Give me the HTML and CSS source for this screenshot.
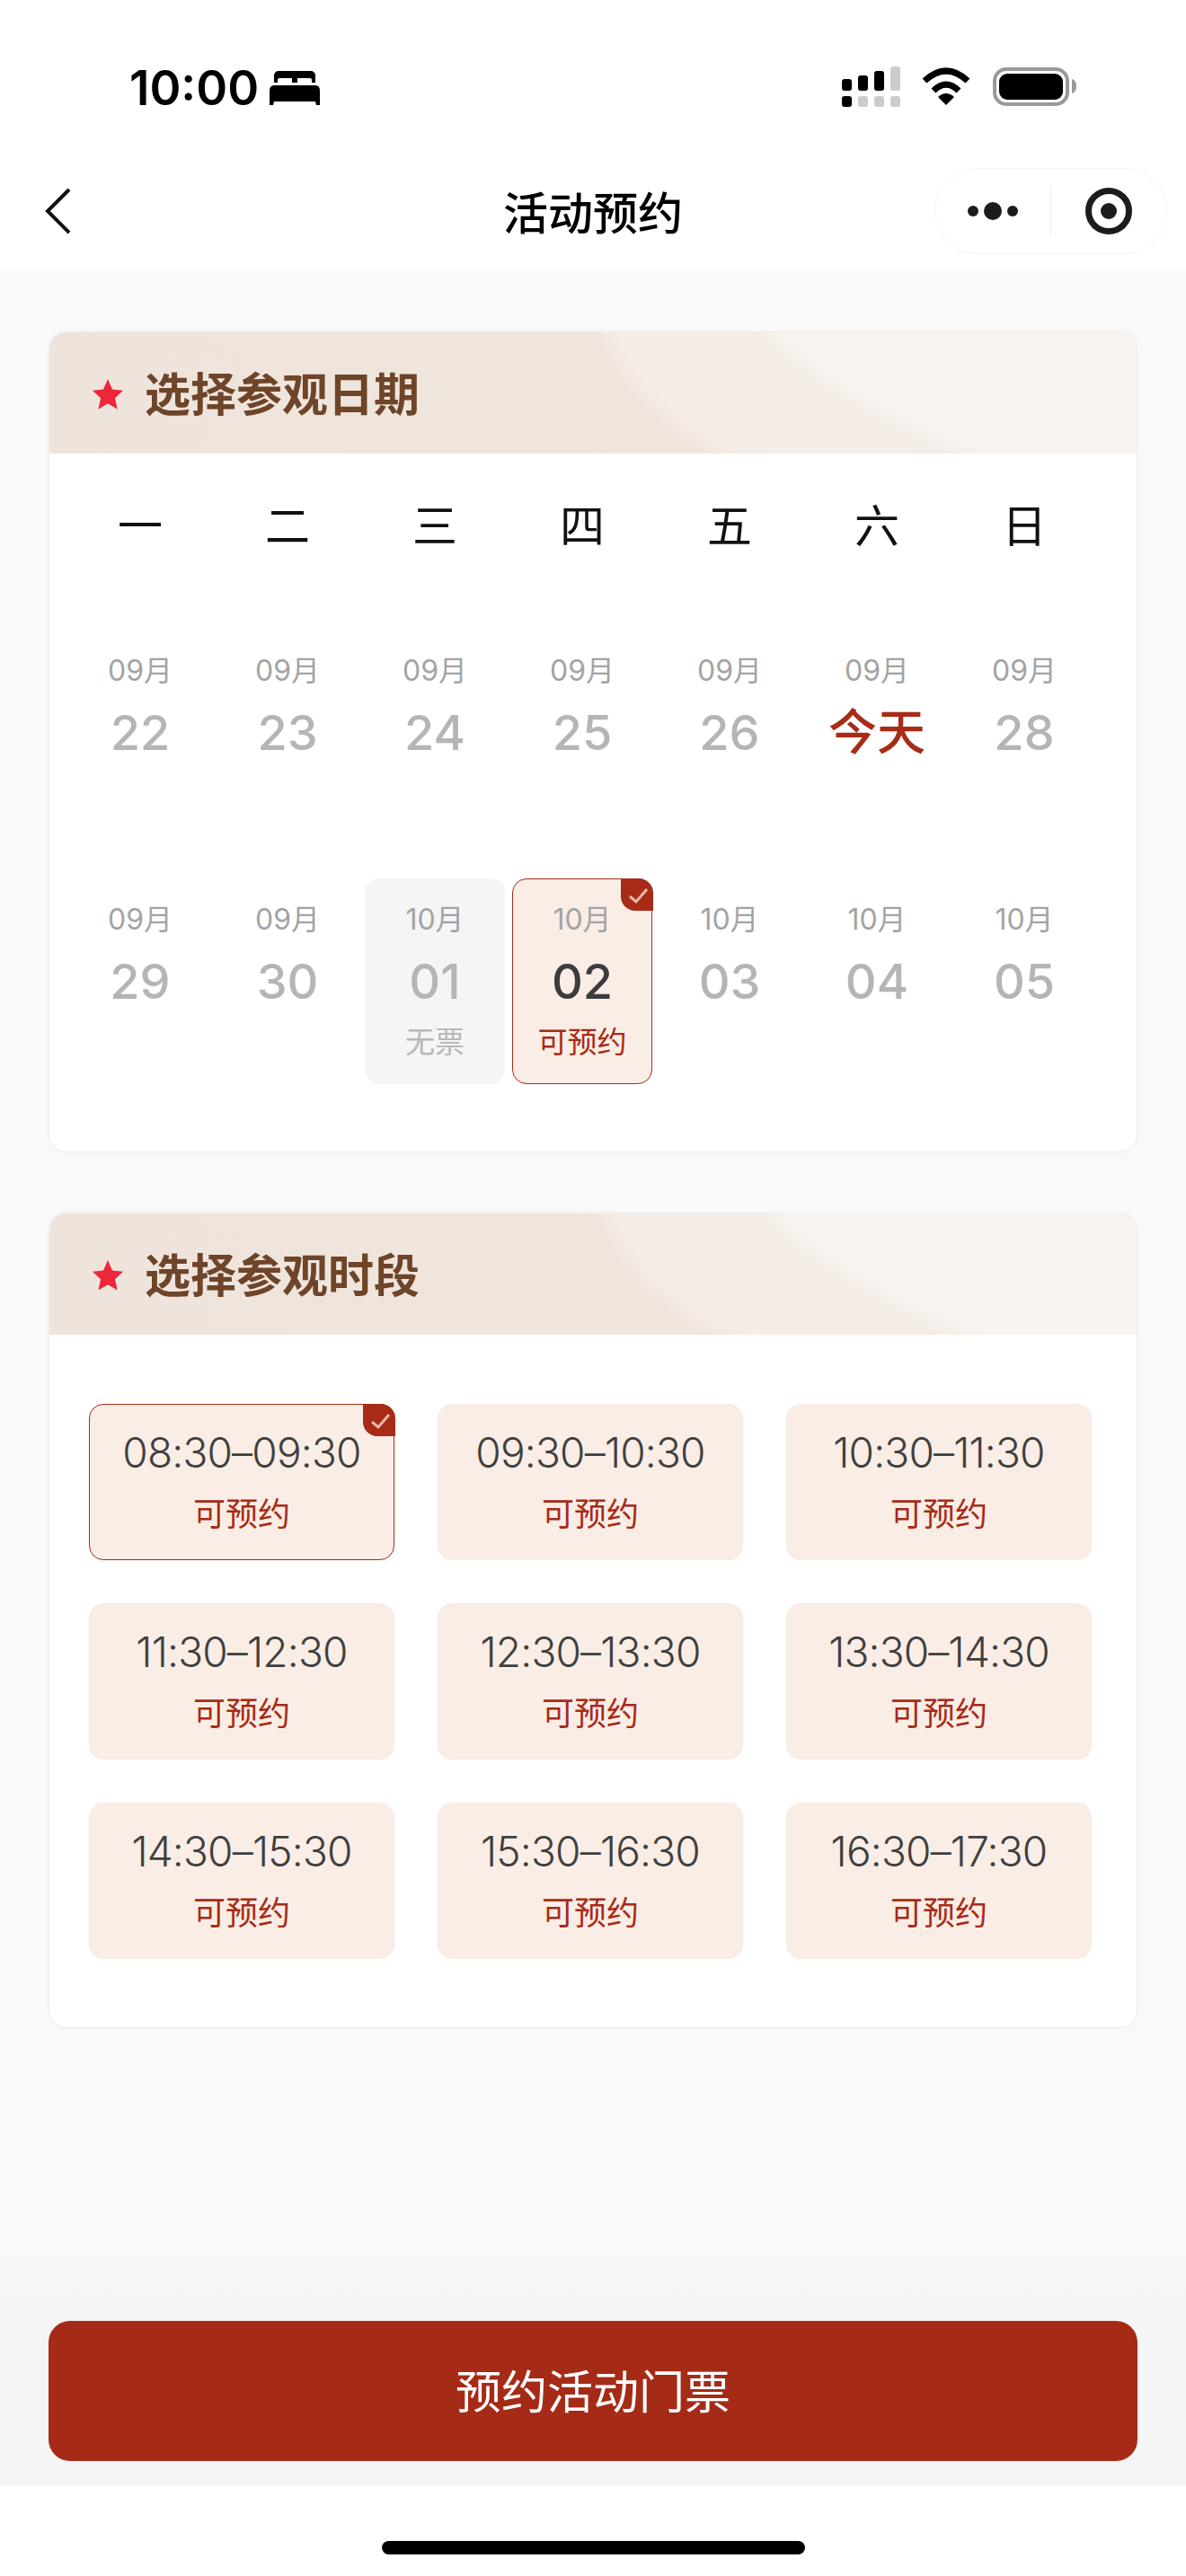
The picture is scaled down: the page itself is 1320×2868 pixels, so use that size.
FILE: index.html
```html
<!DOCTYPE html>
<html lang="zh-Hans">
<head>
  <meta charset="UTF-8">
  <title>活动预约</title>
  <link rel="stylesheet" href="styles.css">
</head>
<body>
  <div class="page">
    <div class="status-bar">
      <div class="status-left">
        <span class="clock">10:00</span>
        <svg class="bed" viewBox="0 0 56 38" width="56" height="38">
          <path d="M5 13V5a5 5 0 0 1 5-5h36a5 5 0 0 1 5 5v8h-4V10q0-2-2-2H31v5h-6V8H11q-2 0-2 2v3z"/>
          <path d="M5 16h46q5 0 5 6v16h-4l-1-4H5l-1 4H0V22q0-6 5-6z"/>
        </svg>
      </div>
      <svg class="status-right" viewBox="0 0 264 52" width="264" height="52">
        <rect x="0" y="16" width="11" height="13" rx="3"/>
        <rect x="18" y="12" width="11" height="17" rx="3"/>
        <rect x="36" y="7" width="11" height="22" rx="3"/>
        <rect x="54" y="2" width="11" height="27" rx="3" fill="#cccccc"/>
        <rect x="0" y="35" width="11" height="12" rx="3"/>
        <rect x="18" y="35" width="11" height="12" rx="3" fill="#cccccc"/>
        <rect x="36" y="35" width="11" height="12" rx="3" fill="#cccccc"/>
        <rect x="54" y="35" width="11" height="12" rx="3" fill="#cccccc"/>
        <path d="M92 18Q116 -4 140 18" fill="none" stroke="#000" stroke-width="7"/>
        <path d="M102 29Q116 15 130 29" fill="none" stroke="#000" stroke-width="7"/>
        <path d="M116 45L107 36Q116 28 125 36z"/>
        <rect x="170" y="5" width="81" height="39" rx="13" fill="none" stroke="#999999" stroke-width="4"/>
        <rect x="175" y="10" width="71" height="29" rx="9"/>
        <path d="M256 16C260 17 261 21 261 24C261 27 260 31 256 32z" fill="#999999"/>
      </svg>
    </div>

    <div class="nav-bar">
      <svg class="back" viewBox="0 0 30 52" width="30" height="52">
        <path d="M27 2L3 26L27 50" fill="none" stroke="#111" stroke-width="4"/>
      </svg>
      <div class="nav-title">活动预约</div>
      <div class="capsule">
        <div class="capsule-side">
          <svg viewBox="0 0 66 20" width="66" height="20" fill="#1c1c1c">
            <circle cx="11" cy="10" r="6"/>
            <circle cx="33" cy="10" r="10"/>
            <circle cx="55" cy="10" r="6"/>
          </svg>
        </div>
        <div class="capsule-line"></div>
        <div class="capsule-side">
          <svg viewBox="0 0 52 52" width="52" height="52" fill="#1c1c1c">
            <circle cx="26" cy="26" r="22.5" fill="none" stroke="#1c1c1c" stroke-width="7"/>
            <circle cx="26" cy="26" r="9"/>
          </svg>
        </div>
      </div>
    </div>

    <div class="content">
      <div class="panel date-panel">
        <div class="panel-head">
          <svg class="head-bg" viewBox="0 0 1212 136" preserveAspectRatio="none">
            <path class="swoosh" d="M612 -30C630 40 670 100 800 160H1280V-30z" fill="#f5ede7"/>
            <path class="swoosh" d="M780 -30C830 50 950 110 1080 160H1280V-30z" fill="#f8f3ee"/>
          </svg>
          <svg class="star" viewBox="0 0 34 34" width="34" height="34">
            <path d="M17 0l5 11.500 12 1.300-9 8.400 2.600 12.300L17 27.300 6.400 33.500 9 21.200 0 12.800l12-1.300z"/>
          </svg>
          <span class="panel-title">选择参观日期</span>
        </div>
        <div class="date-body">
          <div class="week">
            <div>一</div><div>二</div><div>三</div><div>四</div><div>五</div><div>六</div><div>日</div>
          </div>
          <div class="date-grid">
            <div class="day"><span class="day-month">09月</span><span class="day-num">22</span></div>
            <div class="day"><span class="day-month">09月</span><span class="day-num">23</span></div>
            <div class="day"><span class="day-month">09月</span><span class="day-num">24</span></div>
            <div class="day"><span class="day-month">09月</span><span class="day-num">25</span></div>
            <div class="day"><span class="day-month">09月</span><span class="day-num">26</span></div>
            <div class="day"><span class="day-month">09月</span><span class="day-num today">今天</span></div>
            <div class="day"><span class="day-month">09月</span><span class="day-num">28</span></div>
            <div class="day"><span class="day-month">09月</span><span class="day-num">29</span></div>
            <div class="day"><span class="day-month">09月</span><span class="day-num">30</span></div>
            <div class="day soldout"><span class="day-month">10月</span><span class="day-num">01</span><span class="day-state">无票</span></div>
            <div class="day selected">
              <span class="check">
                <svg viewBox="0 0 36 36" width="36" height="36"><path d="M10 20L17 26L29 12" fill="none" stroke="#e9b8ad" stroke-width="3"/></svg>
              </span>
              <span class="day-month">10月</span><span class="day-num">02</span><span class="day-state">可预约</span>
            </div>
            <div class="day"><span class="day-month">10月</span><span class="day-num">03</span></div>
            <div class="day"><span class="day-month">10月</span><span class="day-num">04</span></div>
            <div class="day"><span class="day-month">10月</span><span class="day-num">05</span></div>
          </div>
        </div>
      </div>

      <div class="panel time-panel">
        <div class="panel-head">
          <svg class="head-bg" viewBox="0 0 1212 136" preserveAspectRatio="none">
            <path class="swoosh" d="M612 -30C630 40 670 100 800 160H1280V-30z" fill="#f5ede7"/>
            <path class="swoosh" d="M780 -30C830 50 950 110 1080 160H1280V-30z" fill="#f8f3ee"/>
          </svg>
          <svg class="star" viewBox="0 0 34 34" width="34" height="34">
            <path d="M17 0l5 11.500 12 1.300-9 8.400 2.600 12.300L17 27.300 6.400 33.500 9 21.200 0 12.800l12-1.300z"/>
          </svg>
          <span class="panel-title">选择参观时段</span>
        </div>
        <div class="slot-grid">
          <div class="slot selected">
            <span class="check">
              <svg viewBox="0 0 36 36" width="36" height="36"><path d="M10 20L17 26L29 12" fill="none" stroke="#e9b8ad" stroke-width="3"/></svg>
            </span>
            <span class="slot-time">08:30–09:30</span><span class="slot-state">可预约</span>
          </div>
          <div class="slot"><span class="slot-time">09:30–10:30</span><span class="slot-state">可预约</span></div>
          <div class="slot"><span class="slot-time">10:30–11:30</span><span class="slot-state">可预约</span></div>
          <div class="slot"><span class="slot-time">11:30–12:30</span><span class="slot-state">可预约</span></div>
          <div class="slot"><span class="slot-time">12:30–13:30</span><span class="slot-state">可预约</span></div>
          <div class="slot"><span class="slot-time">13:30–14:30</span><span class="slot-state">可预约</span></div>
          <div class="slot"><span class="slot-time">14:30–15:30</span><span class="slot-state">可预约</span></div>
          <div class="slot"><span class="slot-time">15:30–16:30</span><span class="slot-state">可预约</span></div>
          <div class="slot"><span class="slot-time">16:30–17:30</span><span class="slot-state">可预约</span></div>
        </div>
      </div>

      <div class="footer-bar">
        <button class="submit">预约活动门票</button>
      </div>
    </div>

    <div class="home-area">
      <div class="home-bar"></div>
    </div>
  </div>
</body>
</html>
```

FILE: styles.css
```css
* {
  box-sizing: border-box;
}
body {
  margin: 0;
  background: #fff;
  font-family: Inter, "Noto Sans CJK SC", sans-serif;
}
.page {
  display: flex;
  flex-direction: column;
  height: 2868px;
}

/* status bar */
.status-bar {
  display: flex;
  justify-content: space-between;
  height: 170px;
  padding: 72px 119px 0 144px;
}
.status-left {
  display: flex;
  align-items: center;
  height: 52px;
}
.clock {
  font-size: 53px;
  font-weight: 600;
  line-height: 52px;
  color: #000;
}
.bed {
  margin-left: 12px;
}

/* nav bar */
.nav-bar {
  display: grid;
  grid-template-columns: 1fr auto 1fr;
  align-items: center;
  height: 130px;
  padding: 0 21px;
}
.back {
  margin-left: 29px;
}
.nav-title {
  margin-bottom: 3px;
  font-size: 50px;
  font-weight: 500;
  color: #000;
}
.capsule {
  justify-self: end;
  display: flex;
  align-items: center;
  width: 259px;
  height: 96px;
  border: 1px solid #f4f4f4;
  border-radius: 48px;
}
.capsule-side {
  flex: 1;
  display: flex;
  justify-content: center;
}
.capsule-line {
  width: 1px;
  height: 55px;
  background: #ececec;
}

/* content */
.content {
  flex: 1;
  display: flex;
  flex-direction: column;
  padding-top: 69px;
  background: #f9f9f9;
}
.panel {
  width: 1212px;
  margin: 0 54px;
  background: #fff;
  border: 1px solid #ededed;
  border-radius: 20px;
  box-shadow: 0 0 4px rgba(0, 0, 0, .03);
  overflow: hidden;
}
.time-panel {
  margin-top: 67px;
}
.panel-head {
  position: relative;
  display: flex;
  align-items: center;
  gap: 24px;
  height: 135px;
  padding-left: 48px;
  background: linear-gradient(90deg, #efe4dc, #f0e6de 60%);
}
.head-bg {
  position: absolute;
  top: 0;
  left: 0;
  width: 100%;
  height: 100%;
}
.swoosh {
  filter: blur(8px);
}
.star {
  position: relative;
  margin-top: 2px;
  fill: #ee2639;
}
.panel-title {
  position: relative;
  margin-bottom: 3px;
  font-size: 51px;
  font-weight: 700;
  color: #6e4529;
}

/* calendar */
.date-body {
  padding: 40px 19px 75px;
}
.week {
  display: grid;
  grid-template-columns: repeat(7, 164px);
  height: 82px;
  margin-bottom: 74px;
  font-size: 50px;
  line-height: 82px;
  text-align: center;
  color: #111;
}
.date-grid {
  display: grid;
  grid-template-columns: repeat(7, 156px);
  column-gap: 8px;
  row-gap: 48px;
  padding: 0 4px;
}
.day {
  position: relative;
  display: flex;
  flex-direction: column;
  align-items: center;
  height: 229px;
  padding-top: 24px;
  border: 1px solid transparent;
  border-radius: 16px;
}
.day-month {
  font-size: 32px;
  line-height: 42px;
  color: #a3a3a3;
}
.day-num {
  margin-top: 18px;
  font-size: 54px;
  font-weight: 500;
  line-height: 60px;
  color: #b5b5b5;
}
.today {
  color: #a72b17;
}
.day-state {
  margin-top: 15px;
  font-size: 33px;
  line-height: 44px;
  color: #b8b8b8;
}
.soldout {
  background: #f5f5f5;
}
.day.selected {
  background: #faede5;
  border-color: #a72b17;
}
.day.selected .day-num {
  color: #3c3c3c;
}
.day.selected .day-state {
  color: #a72b17;
}
.check {
  position: absolute;
  top: -1px;
  right: -2px;
  width: 36px;
  height: 36px;
  background: #a72b17;
  border-radius: 0 16px 0 16px;
}
.check svg {
  display: block;
}

/* time slots */
.slot-grid {
  display: grid;
  grid-template-columns: repeat(3, 340px);
  gap: 48px;
  padding: 77px 0 76px 44px;
}
.slot {
  position: relative;
  display: flex;
  flex-direction: column;
  align-items: center;
  height: 174px;
  padding-top: 27px;
  background: #faede5;
  border: 1px solid #f6ebe4;
  border-radius: 16px;
}
.slot.selected {
  border-color: #a72b17;
}
.slot-time {
  font-size: 46px;
  font-weight: 300;
  line-height: 52px;
  letter-spacing: -.8px;
  color: #3f3f3f;
}
.slot-state {
  margin-top: 21px;
  font-size: 36px;
  line-height: 44px;
  color: #a72b17;
}

/* bottom button */
.footer-bar {
  margin-top: auto;
  padding: 84px 54px 28px;
  background: linear-gradient(#f9f9f9, #f5f5f5 60px);
}
.submit {
  display: block;
  width: 100%;
  height: 156px;
  padding: 0 0 5px;
  border: none;
  border-radius: 24px;
  background: #a52b17;
  color: #fff;
  font-family: Inter, "Noto Sans CJK SC", sans-serif;
  font-size: 51px;
}

.home-area {
  height: 100px;
  padding-top: 61px;
}
.home-bar {
  width: 471px;
  height: 15px;
  margin: 0 auto;
  border-radius: 8px;
  background: #000;
}
```
